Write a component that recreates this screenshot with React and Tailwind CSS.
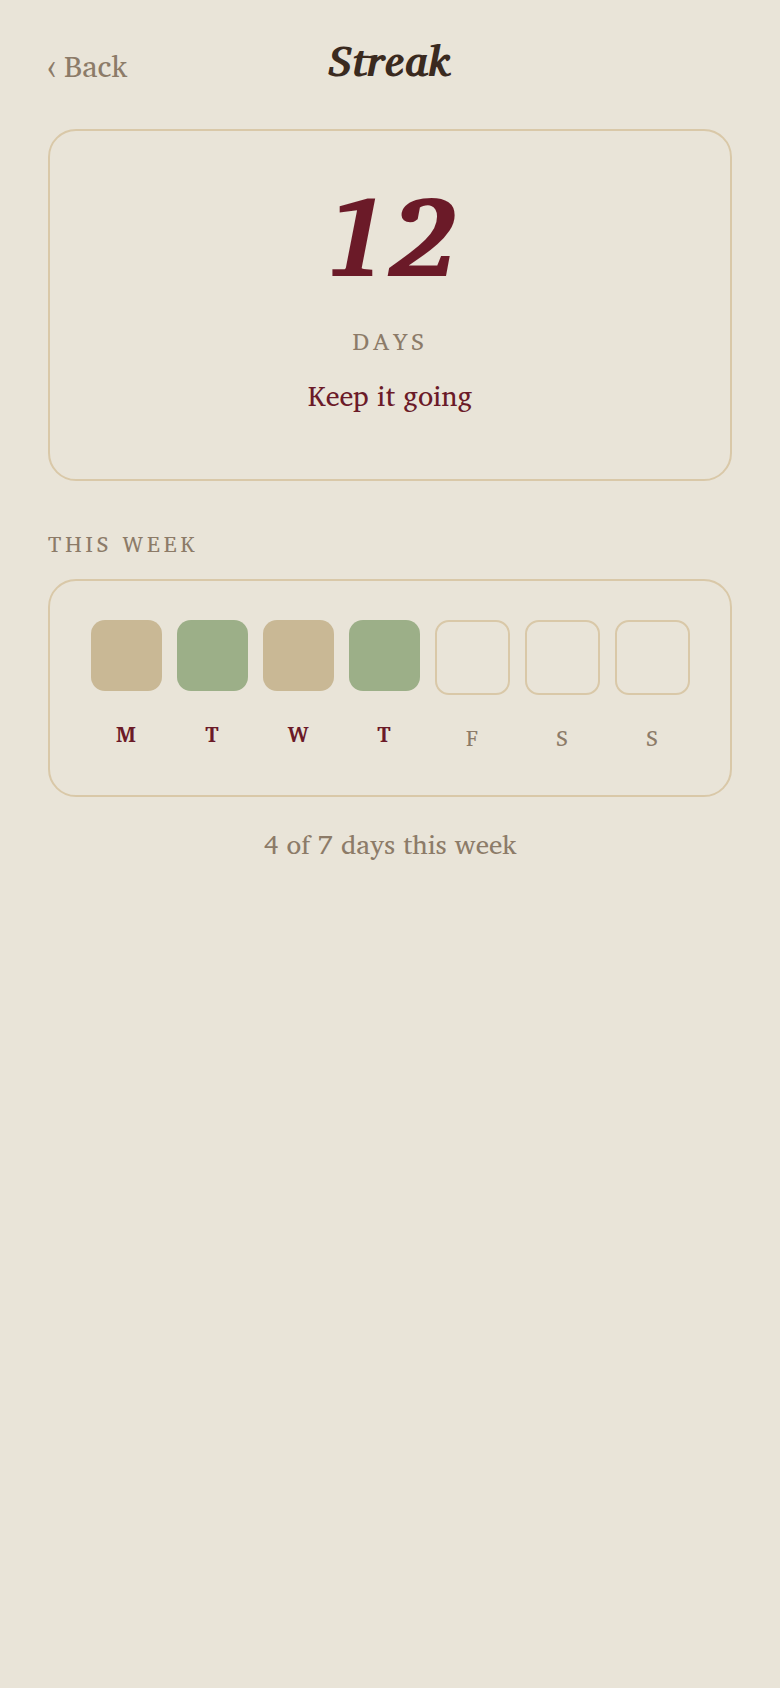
import React from "react";

const days = [
  { l: "M", s: "tan" },
  { l: "T", s: "green" },
  { l: "W", s: "tan" },
  { l: "T", s: "green" },
  { l: "F", s: "empty" },
  { l: "S", s: "empty" },
  { l: "S", s: "empty" },
];

function Day({ l, s }) {
  const done = s !== "empty";
  return (
    <div className="flex flex-col items-center">
      {s === "tan" && <div className="w-[71px] h-[71px] rounded-[14px] bg-[#c9b895]" />}
      {s === "green" && <div className="w-[71px] h-[71px] rounded-[14px] bg-[#9caf88]" />}
      {s === "empty" && <div className="w-[75px] h-[75px] rounded-[14px] border-2 border-[#d9c8a8]" />}
      {done ? (
        <div className="mt-[29px] text-[22px] leading-[28px] font-bold text-[#6b1a28]">{l}</div>
      ) : (
        <div className="mt-[29px] text-[22px] leading-[28px] text-[#8c7b68]">{l}</div>
      )}
    </div>
  );
}

export default function App() {
  return (
    <div className="min-h-screen bg-[#e9e4d8] px-12 pt-[36px] font-['Charis_SIL',serif]">
      <header className="grid grid-cols-[1fr_auto_1fr] items-start">
        <div className="text-[30px] leading-[60px] text-[#8c7b68]">‹ Back</div>
        <h1 className="text-[42px] leading-[48px] font-bold italic text-[#3a2a1f]">Streak</h1>
        <div />
      </header>

      <section className="mt-[33px] rounded-[28px] border-2 border-[#d9c8a8] pt-[38px] pb-[67px] flex flex-col items-center text-center">
        <div className="text-[112px] leading-[130px] font-bold italic text-[#6b1a28]">12</div>
        <div className="mt-[28px] text-[24px] leading-[28px] tracking-[0.15em] text-[#8c7b68]">DAYS</div>
        <div className="mt-[25px] text-[28px] leading-[32px] text-[#6b1a28]">Keep it going</div>
      </section>

      <h2 className="mt-[49px] text-[22px] leading-[28px] tracking-[0.18em] text-[#8c7b68]">THIS WEEK</h2>

      <section className="mt-[21px] rounded-[28px] border-2 border-[#d9c8a8] pt-[39px] pb-[43px] flex justify-center items-start gap-[15px]">
        {days.map((d, i) => (
          <Day key={i} l={d.l} s={d.s} />
        ))}
      </section>

      <p className="mt-[31px] text-center text-[27px] leading-[32px] text-[#8c7b68]">4 of 7 days this week</p>
    </div>
  );
}
